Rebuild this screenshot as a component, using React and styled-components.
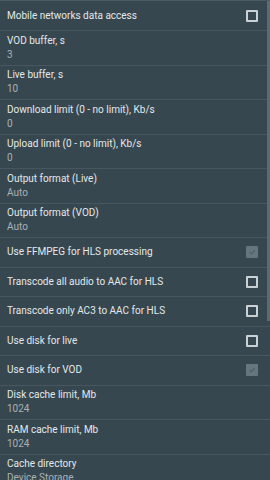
import React from "react";
import styled, { createGlobalStyle } from "styled-components";

const GlobalStyle = createGlobalStyle`
  html, body {
    margin: 0;
    padding: 0;
    background: #37474f;
  }
  body {
    font-family: Roboto, "Noto Sans", sans-serif;
    -webkit-font-smoothing: antialiased;
  }
`;

const settings = [
  { title: "Mobile networks data access", check: false },
  { title: "VOD buffer, s", value: "3" },
  { title: "Live buffer, s", value: "10" },
  { title: "Download limit (0 - no limit), Kb/s", value: "0" },
  { title: "Upload limit (0 - no limit), Kb/s", value: "0" },
  { title: "Output format (Live)", value: "Auto" },
  { title: "Output format (VOD)", value: "Auto" },
  { title: "Use FFMPEG for HLS processing", check: true, disabled: true },
  { title: "Transcode all audio to AAC for HLS", check: false },
  { title: "Transcode only AC3 to AAC for HLS", check: false },
  { title: "Use disk for live", check: false },
  { title: "Use disk for VOD", check: true, disabled: true },
  { title: "Disk cache limit, Mb", value: "1024" },
  { title: "RAM cache limit, Mb", value: "1024" },
  { title: "Cache directory", value: "Device Storage" },
];

function Settings() {
  return (
    <StScreen>
      <StList>
        {settings.map((item, i) => {
          const twoLine = item.value !== undefined;
          return (
            <StItem key={i} $twoLine={twoLine} $first={i === 0}>
              <StTexts>
                <StTitle>{item.title}</StTitle>
                {twoLine && <StSummary>{item.value}</StSummary>}
              </StTexts>
              {item.check !== undefined && (
                <StCheckbox $checked={item.check} $disabled={item.disabled}>
                  {item.check && (
                    <svg width="10" height="10" viewBox="0 0 10 10">
                      <path
                        d="M2 5.2 L4.2 7.3 L8.2 2.8"
                        fill="none"
                        stroke="#4e5f67"
                        strokeWidth="1.6"
                      />
                    </svg>
                  )}
                </StCheckbox>
              )}
            </StItem>
          );
        })}
      </StList>
      <StScrollbar />
    </StScreen>
  );
}

export default function App() {
  return (
    <>
      <GlobalStyle />
      <Settings />
    </>
  );
}

const StScreen = styled.div`
  position: relative;
  width: 270px;
  height: 480px;
  overflow: hidden;
  background: #37474f;
  border-top: 1px solid #4b5a62;
  box-sizing: border-box;
`;

const StList = styled.div`
  display: flex;
  flex-direction: column;
`;

const StItem = styled.div`
  display: flex;
  align-items: center;
  justify-content: space-between;
  box-sizing: border-box;
  height: ${props => (props.$first ? "30px" : props.$twoLine ? "34.5px" : "29.5px")};
  padding: 0 12px 0 7px;
  border-bottom: 1px solid #475760;
  flex-shrink: 0;
`;

const StTexts = styled.div`
  display: flex;
  flex-direction: column;
`;

const StTitle = styled.div`
  font-size: 10px;
  line-height: 14px;
  color: #e4e8ea;
`;

const StSummary = styled.div`
  font-size: 10px;
  line-height: 14px;
  color: #a7b2b7;
`;

const StCheckbox = styled.div`
  width: 12px;
  height: 12px;
  box-sizing: border-box;
  border-radius: 1px;
  display: flex;
  align-items: center;
  justify-content: center;
  border: 2px solid ${props => (props.$disabled ? "#66767e" : "#c9d1d5")};
  background: ${props => (props.$checked ? "#66767e" : "transparent")};
`;

const StScrollbar = styled.div`
  position: absolute;
  top: 0;
  right: 0;
  width: 3px;
  height: 320px;
  background: #5d6b72;
`;
